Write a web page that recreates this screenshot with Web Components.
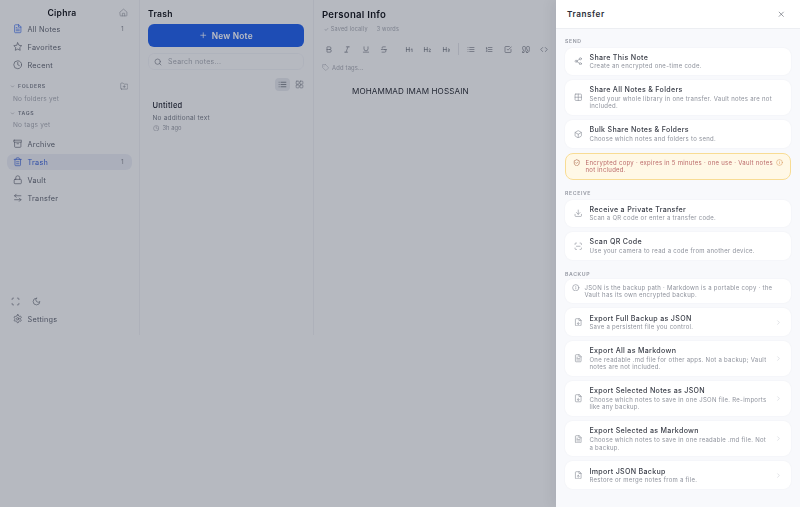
<!DOCTYPE html>
<html>
<head>
<meta charset="utf-8">
<title>Ciphra</title>
<style>
  html, body { margin: 0; height: 100%; overflow: hidden; background: #f7f8fa; }
  body { font-family: Inter, "Liberation Sans", sans-serif; color: #1f2430; }
</style>
</head>
<body>
<app-shell></app-shell>

<script>
const ICONS = {
  home: '<path d="M3 10.5 12 3l9 7.5V20a1 1 0 0 1-1 1H4a1 1 0 0 1-1-1z"/><path d="M9 21v-7h6v7"/>',
  file: '<path d="M14 2H6a2 2 0 0 0-2 2v16a2 2 0 0 0 2 2h12a2 2 0 0 0 2-2V8z"/><path d="M14 2v6h6"/><path d="M16 13H8"/><path d="M16 17H8"/><path d="M10 9H8"/>',
  star: '<polygon points="12 2 15.09 8.26 22 9.27 17 14.14 18.18 21.02 12 17.77 5.82 21.02 7 14.14 2 9.27 8.91 8.26"/>',
  clock: '<circle cx="12" cy="12" r="10"/><path d="M12 6v6l4 2"/>',
  down: '<path d="m6 9 6 6 6-6"/>',
  folderplus: '<path d="M4 20h16a2 2 0 0 0 2-2V8a2 2 0 0 0-2-2h-7.93a2 2 0 0 1-1.66-.9l-.82-1.2A2 2 0 0 0 7.93 3H4a2 2 0 0 0-2 2v13c0 1.1.9 2 2 2Z"/><path d="M12 10v6"/><path d="M9 13h6"/>',
  archive: '<rect x="2" y="3" width="20" height="5" rx="1"/><path d="M4 8v11a2 2 0 0 0 2 2h12a2 2 0 0 0 2-2V8"/><path d="M10 12h4"/>',
  trash: '<path d="M3 6h18"/><path d="M19 6v14a2 2 0 0 1-2 2H7a2 2 0 0 1-2-2V6"/><path d="M8 6V4a2 2 0 0 1 2-2h4a2 2 0 0 1 2 2v2"/><path d="M9 12h6"/><path d="M9 17h6"/>',
  lock: '<rect x="3" y="11" width="18" height="11" rx="2"/><path d="M7 11V7a5 5 0 0 1 10 0v4"/>',
  transfer: '<path d="M8 3 4 7l4 4"/><path d="M4 7h16"/><path d="m16 21 4-4-4-4"/><path d="M20 17H4"/>',
  scan: '<path d="M3 7V5a2 2 0 0 1 2-2h2"/><path d="M17 3h2a2 2 0 0 1 2 2v2"/><path d="M21 17v2a2 2 0 0 1-2 2h-2"/><path d="M7 21H5a2 2 0 0 1-2-2v-2"/>',
  scanline: '<path d="M3 7V5a2 2 0 0 1 2-2h2"/><path d="M17 3h2a2 2 0 0 1 2 2v2"/><path d="M21 17v2a2 2 0 0 1-2 2h-2"/><path d="M7 21H5a2 2 0 0 1-2-2v-2"/><path d="M7 12h10"/>',
  moon: '<path d="M12 3a6 6 0 0 0 9 9 9 9 0 1 1-9-9Z"/>',
  settings: '<path d="M12.22 2h-.44a2 2 0 0 0-2 2v.18a2 2 0 0 1-1 1.73l-.43.25a2 2 0 0 1-2 0l-.15-.08a2 2 0 0 0-2.73.73l-.22.38a2 2 0 0 0 .73 2.73l.15.1a2 2 0 0 1 1 1.72v.51a2 2 0 0 1-1 1.74l-.15.09a2 2 0 0 0-.73 2.73l.22.38a2 2 0 0 0 2.73.73l.15-.08a2 2 0 0 1 2 0l.43.25a2 2 0 0 1 1 1.73V20a2 2 0 0 0 2 2h.44a2 2 0 0 0 2-2v-.18a2 2 0 0 1 1-1.73l.43-.25a2 2 0 0 1 2 0l.15.08a2 2 0 0 0 2.73-.73l.22-.39a2 2 0 0 0-.73-2.73l-.15-.08a2 2 0 0 1-1-1.74v-.5a2 2 0 0 1 1-1.74l.15-.09a2 2 0 0 0 .73-2.73l-.22-.38a2 2 0 0 0-2.73-.73l-.15.08a2 2 0 0 1-2 0l-.43-.25a2 2 0 0 1-1-1.73V4a2 2 0 0 0-2-2z"/><circle cx="12" cy="12" r="3"/>',
  search: '<circle cx="11" cy="11" r="8"/><path d="m21 21-4.3-4.3"/>',
  plus: '<path d="M5 12h14"/><path d="M12 5v14"/>',
  list: '<path d="M8 6h13"/><path d="M8 12h13"/><path d="M8 18h13"/><path d="M3 6h.01"/><path d="M3 12h.01"/><path d="M3 18h.01"/>',
  grid: '<rect x="3" y="3" width="8" height="8" rx="2"/><rect x="13" y="3" width="8" height="8" rx="2"/><rect x="13" y="13" width="8" height="8" rx="2"/><rect x="3" y="13" width="8" height="8" rx="2"/>',
  bold: '<path d="M6 12h9a4 4 0 0 1 0 8H7a1 1 0 0 1-1-1V5a1 1 0 0 1 1-1h7a4 4 0 0 1 0 8"/>',
  italic: '<path d="M19 4h-9"/><path d="M14 20H5"/><path d="M15 4 9 20"/>',
  underline: '<path d="M6 4v6a6 6 0 0 0 12 0V4"/><path d="M4 20h16"/>',
  strike: '<path d="M16 4H9a3 3 0 0 0-2.83 4"/><path d="M14 12a4 4 0 0 1 0 8H6"/><path d="M4 12h16"/>',
  h1: '<path d="M4 12h8"/><path d="M4 18V6"/><path d="M12 18V6"/><path d="m17 12 3-2v8"/>',
  h2: '<path d="M4 12h8"/><path d="M4 18V6"/><path d="M12 18V6"/><path d="M21 18h-4c0-4 4-3 4-6 0-1.5-2-2.5-4-1"/>',
  h3: '<path d="M4 12h8"/><path d="M4 18V6"/><path d="M12 18V6"/><path d="M17.5 10.5c1.7-1 3.5 0 3.5 1.5a2 2 0 0 1-2 2"/><path d="M17 17.5c2 1.5 4 .3 4-1.5a2 2 0 0 0-2-2"/>',
  olist: '<path d="M10 6h11"/><path d="M10 12h11"/><path d="M10 18h11"/><path d="M4 6h1v4"/><path d="M4 10h2"/><path d="M6 18H4c0-1 2-2 2-3s-1-1.5-2-1"/>',
  check: '<path d="m9 11 3 3L22 4"/><path d="M21 12v7a2 2 0 0 1-2 2H5a2 2 0 0 1-2-2V5a2 2 0 0 1 2-2h11"/>',
  quote: '<path d="M3 21c3 0 7-1 7-8V5c0-1.25-.76-2-2-2H4c-1.25 0-2 .75-2 2v6c0 1.25.75 2 2 2 1 0 1 0 1 1v1c0 1-1 2-2 2s-1 .01-1 1v2c0 1 0 1 1 1z"/><path d="M15 21c3 0 7-1 7-8V5c0-1.25-.76-2-2-2h-4c-1.25 0-2 .75-2 2v6c0 1.25.75 2 2 2h.75c0 2.25.25 4-2.75 4v3c0 1 0 1 1 1z"/>',
  code: '<path d="m16 18 6-6-6-6"/><path d="m8 6-6 6 6 6"/>',
  tag: '<path d="M12 2H2v10l9.29 9.29c.94.94 2.48.94 3.42 0l6.58-6.58c.94-.94.94-2.48 0-3.42L12 2Z"/><path d="M7 7h.01"/>',
  share: '<circle cx="18" cy="5" r="3"/><circle cx="6" cy="12" r="3"/><circle cx="18" cy="19" r="3"/><path d="m8.59 13.51 6.83 3.98"/><path d="m15.41 6.51-6.82 3.98"/>',
  table: '<rect x="3" y="3" width="18" height="18" rx="2"/><path d="M3 12h18"/><path d="M12 3v18"/>',
  box: '<path d="M21 8a2 2 0 0 0-1-1.73l-7-4a2 2 0 0 0-2 0l-7 4A2 2 0 0 0 3 8v8a2 2 0 0 0 1 1.73l7 4a2 2 0 0 0 2 0l7-4A2 2 0 0 0 21 16Z"/><path d="m3.3 7 8.7 5 8.7-5"/><path d="M12 22V12"/>',
  shield: '<path d="M20 13c0 5-3.5 7.5-7.66 8.95a1 1 0 0 1-.67-.01C7.5 20.5 4 18 4 13V6a1 1 0 0 1 1-1c2 0 4.5-1.2 6.24-2.72a1.17 1.17 0 0 1 1.52 0C14.51 3.81 17 5 19 5a1 1 0 0 1 1 1z"/><path d="m9 12 2 2 4-4"/>',
  info: '<circle cx="12" cy="12" r="10"/><path d="M12 16v-4"/><path d="M12 8h.01"/>',
  download: '<path d="M21 15v4a2 2 0 0 1-2 2H5a2 2 0 0 1-2-2v-4"/><path d="m7 10 5 5 5-5"/><path d="M12 15V3"/>',
  filedown: '<path d="M15 2H6a2 2 0 0 0-2 2v16a2 2 0 0 0 2 2h12a2 2 0 0 0 2-2V7Z"/><path d="M14 2v5h6"/><path d="M12 18v-6"/><path d="m9 15 3 3 3-3"/>',
  fileup: '<path d="M15 2H6a2 2 0 0 0-2 2v16a2 2 0 0 0 2 2h12a2 2 0 0 0 2-2V7Z"/><path d="M14 2v5h6"/><path d="M12 12v6"/><path d="m15 15-3-3-3 3"/>',
  close: '<path d="M18 6 6 18"/><path d="m6 6 12 12"/>',
  right: '<path d="m9 18 6-6-6-6"/>'
};

class UiIcon extends HTMLElement {
  connectedCallback() {
    const size = this.getAttribute("size") || 9;
    const sw = this.getAttribute("stroke") || 2;
    this.attachShadow({ mode: "open" }).innerHTML = `
      <style>:host { display: inline-flex; flex: none; width: ${size}px; height: ${size}px; } svg { width: 100%; height: 100%; display: block; }</style>
      <svg viewBox="0 0 24 24" fill="none" stroke="currentColor" stroke-width="${sw}" stroke-linecap="round" stroke-linejoin="round">${ICONS[this.getAttribute("name")] || ""}</svg>`;
  }
}
customElements.define("ui-icon", UiIcon);

class NavItem extends HTMLElement {
  connectedCallback() {
    const count = this.getAttribute("count");
    this.attachShadow({ mode: "open" }).innerHTML = `
      <style>
        :host { display: flex; align-items: center; height: 16px; margin: 0 7px; padding: 0 8px 0 5.5px; gap: 5.5px; border-radius: 6px; font-size: 7.3px; letter-spacing: .25px; color: #646975; }
        :host([active]) { background: #e8ebf3; color: #3f66d8; }
        span { flex: 1; }
        b { font-weight: 400; font-size: 6.5px; color: #8a8e98; }
      </style>
      <ui-icon name="${this.getAttribute("icon")}" size="9.5" stroke="1.7"></ui-icon>
      <span><slot></slot></span>
      ${count ? `<b>${count}</b>` : ""}`;
  }
}
customElements.define("nav-item", NavItem);

class SideBar extends HTMLElement {
  connectedCallback() {
    this.attachShadow({ mode: "open" }).innerHTML = `
      <style>
        :host { display: flex; flex-direction: column; width: 139px; flex: none; height: 335px; border-right: 1px solid #eceef2; box-sizing: content-box; }
        .brand { display: flex; align-items: center; height: 17px; padding: 4px 11px 0 0; }
        .brand span { flex: 1; text-align: center; padding-left: 5px; font-size: 8.6px; font-weight: 600; color: #12151c; letter-spacing: .25px; }
        .brand ui-icon { color: #8c909a; }
        nav { display: flex; flex-direction: column; gap: 2px; }
        .head { display: flex; align-items: center; gap: 3px; margin: 0 11px 0 10px; font-size: 5.2px; font-weight: 600; letter-spacing: .6px; color: #7b808b; }
        .head span { flex: 1; }
        .none { margin: 0 0 0 13px; font-size: 6.5px; letter-spacing: .2px; color: #a7abb3; }
        .folders { margin-top: 8px; height: 10px; }
        .tags { margin-top: 4px; height: 8px; }
        .n1 { margin-top: 3px; line-height: 11px; }
        .n2 { margin-top: 3px; line-height: 11px; }
        .bottom { margin-top: 5px; }
        .foot { margin-top: auto; padding-bottom: 8px; }
        .tools { display: flex; gap: 12px; padding: 0 0 0 11px; height: 16px; align-items: center; color: #6a6f7b; margin-bottom: 2px; }
      </style>
      <div class="brand"><span>Ciphra</span><ui-icon name="home" size="9" stroke="1.5"></ui-icon></div>
      <nav>
        <nav-item icon="file" count="1">All Notes</nav-item>
        <nav-item icon="star">Favorites</nav-item>
        <nav-item icon="clock">Recent</nav-item>
      </nav>
      <div class="head folders"><ui-icon name="down" size="5"></ui-icon><span>FOLDERS</span><ui-icon name="folderplus" size="8.5" stroke="1.4"></ui-icon></div>
      <div class="none n1">No folders yet</div>
      <div class="head tags"><ui-icon name="down" size="5"></ui-icon><span>TAGS</span></div>
      <div class="none n2">No tags yet</div>
      <nav class="bottom">
        <nav-item icon="archive">Archive</nav-item>
        <nav-item icon="trash" count="1" active>Trash</nav-item>
        <nav-item icon="lock">Vault</nav-item>
        <nav-item icon="transfer">Transfer</nav-item>
      </nav>
      <div class="foot">
        <div class="tools"><ui-icon name="scan" size="9" stroke="1.7"></ui-icon><ui-icon name="moon" size="9" stroke="1.7"></ui-icon></div>
        <nav-item icon="settings">Settings</nav-item>
      </div>`;
    const first = this.shadowRoot.querySelector("nav-item");
    first.shadowRoot.querySelector("ui-icon").style.color = "#3f6fe8";
  }
}
customElements.define("side-bar", SideBar);

class NoteList extends HTMLElement {
  connectedCallback() {
    this.attachShadow({ mode: "open" }).innerHTML = `
      <style>
        :host { display: flex; flex-direction: column; flex: none; width: 174px; height: 335px; box-sizing: border-box; padding: 0 9px 0 8px; border-right: 1px solid #eceef2; }
        h2 { margin: 0; height: 24px; line-height: 28px; font-size: 8.6px; font-weight: 600; color: #12151c; letter-spacing: .25px; }
        button { display: flex; align-items: center; justify-content: center; gap: 4px; height: 23px; border: 0; border-radius: 6px; background: #2563eb; color: #fff; font: 600 8.3px Inter, "Liberation Sans", sans-serif; letter-spacing: .25px; padding: 0; }
        .search { display: flex; align-items: center; gap: 6px; height: 15px; margin-top: 6px; padding: 0 5px; border: 1px solid #eef0f4; border-radius: 6px; font-size: 7px; letter-spacing: .25px; color: #a7abb3; }
        .search ui-icon { color: #7b808b; }
        .views { display: flex; justify-content: flex-end; align-items: center; gap: 2px; margin: 8px -3px 0 0; color: #7b808b; }
        .views i { display: flex; align-items: center; justify-content: center; width: 15px; height: 13px; border-radius: 4px; }
        .views i.on { background: #e3e6ec; color: #515662; }
        .note { margin-top: 10px; padding-left: 4.5px; }
        .title { font-size: 7.5px; font-weight: 500; line-height: 10px; letter-spacing: .25px; color: #1f2430; }
        .sub { margin-top: 2px; font-size: 6.5px; line-height: 10px; letter-spacing: .2px; color: #7b808b; }
        .time { display: flex; align-items: center; gap: 3.5px; font-size: 5.8px; line-height: 10px; color: #9ca0a9; }
      </style>
      <h2>Trash</h2>
      <button><ui-icon name="plus" size="8.5"></ui-icon>New Note</button>
      <div class="search"><ui-icon name="search" size="8"></ui-icon>Search notes...</div>
      <div class="views">
        <i class="on"><ui-icon name="list" size="9" stroke="1.7"></ui-icon></i>
        <i><ui-icon name="grid" size="9" stroke="1.5"></ui-icon></i>
      </div>
      <div class="note">
        <div class="title">Untitled</div>
        <div class="sub">No additional text</div>
        <div class="time"><ui-icon name="clock" size="6.5"></ui-icon>3h ago</div>
      </div>`;
  }
}
customElements.define("note-list", NoteList);

class NoteEditor extends HTMLElement {
  connectedCallback() {
    this.attachShadow({ mode: "open" }).innerHTML = `
      <style>
        :host { display: block; flex: 1; min-width: 0; height: 335px; padding: 0 8px; box-sizing: border-box; }
        h1 { margin: 0; height: 24px; line-height: 29px; font-size: 9.6px; font-weight: 600; color: #12151c; letter-spacing: .25px; }
        .meta { display: flex; gap: 9px; height: 10px; padding-left: 2px; line-height: 10px; font-size: 5.5px; letter-spacing: .2px; color: #a7abb3; }
        .tools { display: flex; align-items: center; height: 12px; margin-top: 9px; padding-left: 3px; color: #6a6f7b; }
        .tools ui-icon { width: 8px; margin-right: 10.3px; }
        .tools .hh { width: 8.5px; margin-right: 10px; }
        .tools .gap { margin-left: 6.5px; }
        .tools s { width: 1px; height: 12px; margin: 0 8.5px 0 -2.5px; background: #dfe1e6; }
        .tags { display: flex; align-items: center; gap: 3px; height: 10px; margin-top: 1px; padding-top: 6px; font-size: 5.8px; letter-spacing: .2px; color: #a7abb3; }
        .body { margin: 14px 0 0 30px; font-size: 8.1px; line-height: 10px; letter-spacing: .1px; color: #2c3038; }
      </style>
      <h1>Personal Info</h1>
      <div class="meta"><span>✓ Saved locally</span><span>3 words</span></div>
      <div class="tools">
        <ui-icon name="bold" stroke="1.8"></ui-icon><ui-icon name="italic" stroke="1.8"></ui-icon><ui-icon name="underline" stroke="1.8"></ui-icon><ui-icon name="strike" stroke="1.8"></ui-icon>
        <ui-icon class="hh gap" name="h1" stroke="1.8"></ui-icon><ui-icon class="hh" name="h2" stroke="1.8"></ui-icon><ui-icon class="hh" name="h3" stroke="1.8"></ui-icon>
        <s></s>
        <ui-icon name="list" stroke="1.8"></ui-icon><ui-icon name="olist" stroke="1.8"></ui-icon><ui-icon name="check" stroke="1.8"></ui-icon><ui-icon name="quote" stroke="1.8"></ui-icon><ui-icon name="code" stroke="1.8"></ui-icon>
      </div>
      <div class="tags"><ui-icon name="tag" size="7" stroke="1.7"></ui-icon>Add tags...</div>
      <div class="body">MOHAMMAD IMAM HOSSAIN</div>`;
  }
}
customElements.define("note-editor", NoteEditor);

class TransferRow extends HTMLElement {
  connectedCallback() {
    const chevron = this.hasAttribute("chevron");
    this.attachShadow({ mode: "open" }).innerHTML = `
      <style>
        :host { display: flex; align-items: center; padding: 5.15px 9px; background: #fff; border-radius: 8px; box-shadow: 0 0 2px rgba(30,40,70,.05); gap: 7px; }
        ui-icon.lead { color: #7f8490; }
        ui-icon.go { color: #cdd0d6; margin-left: -3px; }
        .txt { flex: 1; min-width: 0; }
        .t { font-size: 7.1px; line-height: 9px; font-weight: 500; letter-spacing: .3px; color: #3a3e48; }
        .d { margin-top: .5px; font-size: 6px; line-height: 7.7px; letter-spacing: .27px; color: #8e929c; }
      </style>
      <ui-icon class="lead" name="${this.getAttribute("icon")}" size="8.5" stroke="1.6"></ui-icon>
      <div class="txt"><div class="t">${this.getAttribute("title")}</div><div class="d"><slot></slot></div></div>
      ${chevron ? '<ui-icon class="go" name="right" size="7"></ui-icon>' : ""}`;
  }
}
customElements.define("transfer-row", TransferRow);

class TransferNotice extends HTMLElement {
  connectedCallback() {
    const warn = this.hasAttribute("warn");
    this.attachShadow({ mode: "open" }).innerHTML = `
      <style>
        :host { display: flex; align-items: flex-start; gap: 5px; padding: ${warn ? "5px" : "4.5px"} 7px; border-radius: 8px; font-size: 6px; line-height: 7.7px; letter-spacing: .27px;
          background: ${warn ? "#fff8e6" : "#fff"}; color: ${warn ? "#bb6a6a" : "#8e929c"};
          border: ${warn ? "1px solid #f8dc94" : "0"}; box-shadow: ${warn ? "none" : "0 0 2px rgba(30,40,70,.05)"}; }
        div { flex: 1; }
        ui-icon { color: ${warn ? "#a25a3a" : "#7f8490"}; }
        ui-icon.end { color: #d99a5a; margin-left: -3px; }
      </style>
      <ui-icon name="${this.getAttribute("icon")}" size="7.5" stroke="1.8"></ui-icon>
      <div><slot></slot></div>
      ${warn ? '<ui-icon class="end" name="info" size="7" stroke="1.7"></ui-icon>' : ""}`;
  }
}
customElements.define("transfer-notice", TransferNotice);

class TransferDrawer extends HTMLElement {
  connectedCallback() {
    this.attachShadow({ mode: "open" }).innerHTML = `
      <style>
        :host { position: absolute; top: 0; right: 0; bottom: 0; width: 244px; display: flex; flex-direction: column; background: #f8f9fc; box-shadow: -4px 0 12px rgba(15,23,42,.06); }
        header { display: flex; align-items: center; justify-content: space-between; height: 29px; flex: none; padding: 0 15px 0 11px; background: #fff; border-bottom: 1px solid #eceef2; box-sizing: border-box; font-size: 8.2px; font-weight: 600; letter-spacing: .55px; color: #2a2e38; }
        header ui-icon { color: #555a65; }
        .scroll { display: flex; flex-direction: column; gap: 5px; padding: 0 9px; }
        h3 { margin: 0 0 -2.5px; font-size: 5.2px; line-height: 8px; font-weight: 600; letter-spacing: .6px; color: #9397a1; }
        h3.first { margin-top: 8px; }
        h3.next { margin-top: 4px; }
        h3.last { margin: 5.5px 0 -4px; }
      </style>
      <header><span>Transfer</span><ui-icon name="close" size="8.5" stroke="1.7"></ui-icon></header>
      <div class="scroll">
        <h3 class="first">SEND</h3>
        <transfer-row icon="share" title="Share This Note">Create an encrypted one-time code.</transfer-row>
        <transfer-row icon="table" title="Share All Notes &amp; Folders">Send your whole library in one transfer. Vault notes are not included.</transfer-row>
        <transfer-row icon="box" title="Bulk Share Notes &amp; Folders">Choose which notes and folders to send.</transfer-row>
        <transfer-notice warn icon="shield">Encrypted copy · expires in 5 minutes · one use · Vault notes not included.</transfer-notice>
        <h3 class="next">RECEIVE</h3>
        <transfer-row icon="download" title="Receive a Private Transfer">Scan a QR code or enter a transfer code.</transfer-row>
        <transfer-row icon="scanline" title="Scan QR Code">Use your camera to read a code from another device.</transfer-row>
        <h3 class="last">BACKUP</h3>
        <transfer-notice icon="info">JSON is the backup path · Markdown is a portable copy · the Vault has its own encrypted backup.</transfer-notice>
        <transfer-row chevron icon="filedown" title="Export Full Backup as JSON">Save a persistent file you control.</transfer-row>
        <transfer-row chevron icon="file" title="Export All as Markdown">One readable .md file for other apps. Not a backup; Vault notes are not included.</transfer-row>
        <transfer-row chevron icon="filedown" title="Export Selected Notes as JSON">Choose which notes to save in one JSON file. Re-imports like any backup.</transfer-row>
        <transfer-row chevron icon="file" title="Export Selected as Markdown">Choose which notes to save in one readable .md file. Not a backup.</transfer-row>
        <transfer-row chevron icon="fileup" title="Import JSON Backup">Restore or merge notes from a file.</transfer-row>
      </div>`;
  }
}
customElements.define("transfer-drawer", TransferDrawer);

class AppShell extends HTMLElement {
  connectedCallback() {
    this.attachShadow({ mode: "open" }).innerHTML = `
      <style>
        :host { display: block; position: relative; width: 800px; height: 507px; overflow: hidden; filter: blur(.45px); }
        .panes { display: flex; height: 100%; }
        .scrim { position: absolute; inset: 0; background: rgba(15,23,42,.28); }
      </style>
      <div class="panes"><side-bar></side-bar><note-list></note-list><note-editor></note-editor></div>
      <div class="scrim"></div>
      <transfer-drawer></transfer-drawer>`;
  }
}
customElements.define("app-shell", AppShell);
</script>
</body>
</html>
